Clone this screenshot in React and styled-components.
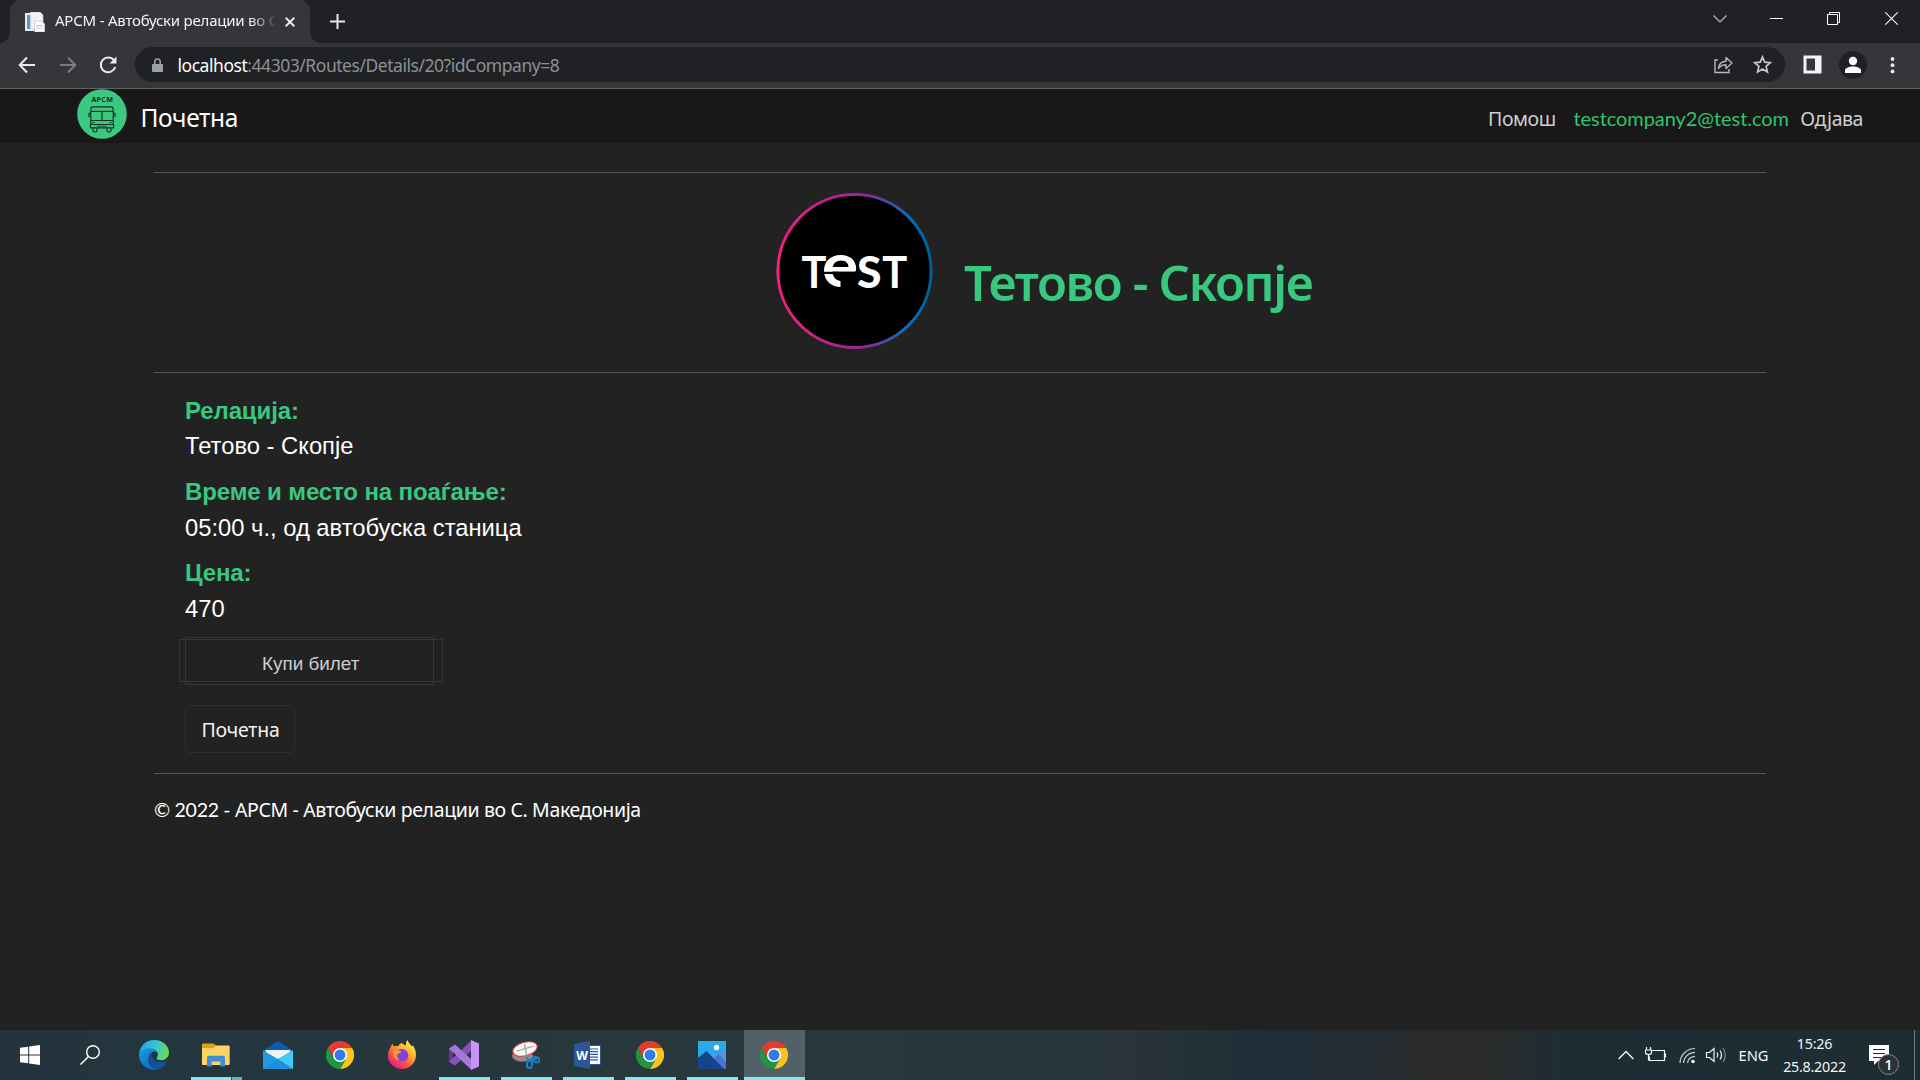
import React from "react";
import styled, { createGlobalStyle, css } from "styled-components";

const SEGOE = '"Noto Sans", "Open Sans", sans-serif';
const ARIAL = '"Liberation Sans", Arial, sans-serif';
const LATO = 'Lato, "Noto Sans", sans-serif';
const GREEN = "#38c880";

const GlobalStyle = createGlobalStyle`
  *, *::before, *::after { box-sizing: border-box; }
  body { margin: 0; background: #222; color: #fff; font-family: ${SEGOE}; }
  svg { display: block; flex: none; }
`;

const Screen = styled.div`
  width: 1920px;
  height: 1080px;
  display: flex;
  flex-direction: column;
  overflow: hidden;
`;

/* ---------- browser chrome ---------- */
const TabStrip = styled.div`
  height: 43px;
  flex: none;
  display: flex;
  background: #202124;
  padding-left: 10px;
`;

const Tab = styled.div`
  position: relative;
  width: 300px;
  height: 43px;
  display: flex;
  align-items: center;
  padding: 0 15px;
  background: #35363a;
  border-radius: 10px 10px 0 0;
  &::before, &::after {
    content: "";
    position: absolute;
    bottom: 0;
    width: 10px;
    height: 10px;
  }
  &::before { left: -10px; background: radial-gradient(circle at 0 0, #202124 9.5px, #35363a 10px); }
  &::after { right: -10px; background: radial-gradient(circle at 100% 0, #202124 9.5px, #35363a 10px); }
`;

const TabTitle = styled.div`
  width: 220px;
  margin: 0 10px;
  padding-bottom: 3px;
  overflow: hidden;
  white-space: nowrap;
  font-size: 15px;
  line-height: 24px;
  letter-spacing: -0.22px;
  color: #f1f3f4;
  mask-image: linear-gradient(90deg, #000 195px, transparent 222px);
`;

const NewTab = styled.div`
  display: flex;
  padding: 14px 0 0 20px;
`;

const WindowButtons = styled.div`
  display: flex;
  margin-left: auto;
  svg { margin-top: 9px; }
`;

const WindowButton = styled.div`
  width: ${(p) => p.$w}px;
  display: flex;
  justify-content: center;
`;

const Toolbar = styled.div`
  height: 46px;
  flex: none;
  display: flex;
  align-items: center;
  padding: 0 15px 2px 17px;
  background: #35363a;
  border-bottom: 1px solid #606164;
`;

const NavIcons = styled.div`
  display: flex;
  gap: 20.5px;
  width: 118px;
`;

const Omnibox = styled.div`
  width: 1650px;
  height: 35px;
  display: flex;
  align-items: center;
  padding: 0 12px 0 16px;
  border-radius: 18px;
  background: #202124;
`;

const Url = styled.div`
  margin-left: 13.5px;
  padding-top: 2px;
  flex: 1;
  font-size: 17.5px;
  line-height: 35px;
  letter-spacing: -0.46px;
  color: #8d9094;
  white-space: nowrap;
`;

const UrlHost = styled.span`
  color: #fff;
`;

const OmniActions = styled.div`
  display: flex;
  gap: 18px;
`;

const ToolbarActions = styled.div`
  display: flex;
  align-items: center;
  margin-left: 18px;
`;

const Avatar = styled.div`
  width: 28px;
  height: 28px;
  margin: 0 17px 0 17px;
  display: flex;
  align-items: center;
  justify-content: center;
  border-radius: 50%;
  background: #202124;
`;

/* ---------- web page ---------- */
const Navbar = styled.nav`
  height: 54px;
  flex: none;
  display: flex;
  background: #191717;
  padding: 0 57px 0 77px;
`;

const Brand = styled.a`
  display: flex;
  font-size: 24.5px;
  line-height: 58px;
  letter-spacing: -0.35px;
  margin-right: auto;
  svg { margin: 0.4px 13.5px 0 0; }
`;

const NavLink = styled.a`
  margin-left: ${(p) => p.$gap || 0}px;
  font-size: 19.5px;
  line-height: 59px;
  letter-spacing: -0.45px;
  color: #cfcfcf;
  ${(p) => p.$account && css`
    font-family: ${LATO};
    font-size: 20px;
    letter-spacing: -0.06px;
    color: #2fc46f;
  `}
`;

const Page = styled.main`
  flex: 1;
  width: 1612px;
  margin-left: 154px;
  padding-top: 29px;
`;

const Rule = styled.hr`
  height: 1px;
  margin: 0;
  border: 0;
  background: #585858;
`;

const Hero = styled.header`
  height: 199px;
  display: flex;
  padding: 19px 0 0 621px;
`;

const Heading = styled.h1`
  margin: 60px 0 0 31px;
  font-size: 49px;
  font-weight: 600;
  line-height: 60px;
  letter-spacing: -1.35px;
  color: ${GREEN};
`;

const Details = styled.section`
  height: 400px;
  padding: 19.75px 0 0 31px;
  font-family: ${ARIAL};
`;

const DetailList = styled.dl`
  margin: 0;
  height: 244.25px;
`;

const Term = styled.dt`
  margin-bottom: 0.5px;
  font-size: 24px;
  font-weight: 700;
  line-height: 35px;
  letter-spacing: -0.12px;
  color: ${GREEN};
`;

const Value = styled.dd`
  margin: 0 0 9.75px;
  font-size: 23.75px;
  line-height: 36px;
`;

const BuyButton = styled.div`
  position: relative;
  width: 249px;
  height: 48px;
  border: 1px solid #353535;
  padding-left: 76px;
  font-size: 18.9px;
  line-height: 51px;
  color: #cdcdcd;
  &::before {
    content: "";
    position: absolute;
    inset: 1px -10px 2px -7px;
    border: 1px solid #353535;
  }
`;

const BackButton = styled.div`
  width: 110px;
  height: 48px;
  margin-top: 20px;
  padding-left: 1px;
  border: 1px solid #303030;
  border-radius: 5px;
  text-align: center;
  font-family: ${SEGOE};
  font-size: 19.5px;
  line-height: 48px;
  letter-spacing: -0.2px;
  color: #f2f2f2;
`;

const Footer = styled.footer`
  padding-top: 19px;
  font-size: 19.5px;
  line-height: 33px;
  letter-spacing: -0.37px;
  white-space: pre;
`;

const FooterYear = styled.span`
  font-family: ${LATO};
  letter-spacing: -0.3px;
`;

/* ---------- taskbar ---------- */
const Taskbar = styled.div`
  height: 50px;
  flex: none;
  display: flex;
  background: linear-gradient(90deg, #23343d 0, #24363e 300px, #28373c 560px, #27373c 900px, #283439 1130px, #212e37 1250px, #212c35 1350px, #2a2a29 1430px, #2a2a29 1480px, #1e2d34 1570px, #1e2c35 1650px, #1f2c34 1920px);
`;

const TaskCell = styled.div`
  width: ${(p) => p.$w || 61}px;
  height: 50px;
  margin-right: ${(p) => (p.$w ? 0 : 1)}px;
  padding-right: ${(p) => (p.$w ? 0 : 1)}px;
  display: flex;
  align-items: center;
  justify-content: center;
  background: ${(p) => (p.$state === "active" ? "#526067" : "transparent")};
  background-image: ${(p) =>
    p.$state === "active"
      ? "linear-gradient(#8ee4ec, #8ee4ec)"
      : p.$state === "group"
      ? "linear-gradient(90deg, #8ee4ec 40px, #3e5f68 40px, #3e5f68 41px, #6fafb9 41px)"
      : "linear-gradient(#8ee4ec, #8ee4ec)"};
  background-repeat: no-repeat;
  background-position: 50% 100%;
  background-size: ${(p) =>
    p.$state === "active" ? "61px 3px" : p.$state ? "51px 3px" : "0 0"};
`;

const StartCells = styled.div`
  display: flex;
  width: 124px;
`;

const Tray = styled.div`
  display: flex;
  align-items: center;
  margin-left: auto;
  color: #f3f5f6;
`;

const Language = styled.div`
  margin-left: 10.5px;
  width: 43px;
  font-size: 14.7px;
  line-height: 48px;
`;

const Clock = styled.div`
  width: 66px;
  display: flex;
  flex-direction: column;
  align-items: center;
  font-size: 14.3px;
  line-height: 23px;
  letter-spacing: -0.25px;
`;

const Notifications = styled.div`
  width: 33px;
  margin: 0 15px 0 18.5px;
`;

const ShowDesktop = styled.div`
  width: 6px;
  height: 50px;
  border-left: 1px solid #707a80;
`;

/* ---------- drawings ---------- */
const Stroke = ({ w, h, vb, c = "#e8eaed", sw = 2, children, ...rest }) => (
  <svg width={w} height={h} viewBox={vb || `0 0 ${w} ${h}`} fill="none" stroke={c} strokeWidth={sw} {...rest}>
    {children}
  </svg>
);

const PageIcon = () => (
  <svg width="20" height="20" viewBox="0 0 20 20">
    <path d="M0 1h9v18H0z" fill="#e9eef2" />
    <path d="M2 3h3.5v14H2z" fill="#4d9ccc" />
    <path d="M5.5 0H15l3 3v14H5.5z" fill="#f0f1f3" stroke="#c9ced4" strokeWidth=".6" />
    <path d="M9.5 9h7l3.3 3v8H9.5z" fill="#fafafa" stroke="#b9bfc7" strokeWidth=".6" />
    <path d="M11 13.5h7M11 16h7" stroke="#c6cbd2" />
  </svg>
);

const BusLogo = () => (
  <svg width="50" height="50" viewBox="0 0 50 50">
    <circle cx="25" cy="25" r="24.8" fill="#3bc982" />
    <text x="25.3" y="13.3" textAnchor="middle" fontFamily="Open Sans, sans-serif" fontWeight="700" fontSize="7.2" letterSpacing=".25" fill="#12351f">АРСМ</text>
    <g fill="none" stroke="#12351f" strokeWidth="1.15">
      <path d="M13.8 35V20.3q0-2.5 2.5-2.5h17.4q2.5 0 2.5 2.5V35M13.8 22.3h22.4M14 31.5h22M25 22.3v9.2M13.8 24.3h-1.7v4M36.2 24.3h1.7v4" />
      <path d="M13.4 35.5h23.2v3.3H13.4zM16 39v2.6q0 1.4 1.5 1.4h1q1.5 0 1.5-1.4V39M30 39v2.6q0 1.4 1.5 1.4h1q1.5 0 1.5-1.4V39" />
      <path d="M15 33.6h3M32 33.6h3M20 37.2h10" strokeWidth=".8" />
    </g>
  </svg>
);

const TestLogo = () => (
  <svg width="158" height="158" viewBox="0 0 158 158">
    <defs>
      <linearGradient id="ring" x1="0" x2="1" y1="0" y2="0">
        <stop offset="0" stopColor="#f4207c" />
        <stop offset=".1" stopColor="#e0207e" />
        <stop offset=".55" stopColor="#93278f" />
        <stop offset=".72" stopColor="#4a4ba8" />
        <stop offset=".86" stopColor="#0071bc" />
        <stop offset="1" stopColor="#005f9e" />
      </linearGradient>
    </defs>
    <circle cx="79.5" cy="79" r="76.6" fill="#000" stroke="url(#ring)" strokeWidth="3" />
    <g fill="#fff" fontFamily="Lato, sans-serif" fontWeight="700">
      <text x="26.6" y="95.6" fontSize="43" textLength="25" lengthAdjust="spacingAndGlyphs">T</text>
      <text x="46.8" y="95.4" fontSize="61" textLength="36.5" lengthAdjust="spacingAndGlyphs">e</text>
      <text x="82" y="95.6" fontSize="43" fontWeight="900" textLength="24.5" lengthAdjust="spacingAndGlyphs">S</text>
      <text x="107.3" y="95.6" fontSize="43" textLength="25" lengthAdjust="spacingAndGlyphs">T</text>
    </g>
    <path d="M48 80.900h16" stroke="#000" strokeWidth="2.200" />
    <path d="M65.500 85.500h16.500v12H65.500z" fill="#000" />
  </svg>
);

const Chrome = () => (
  <svg width="28" height="28" viewBox="0 0 48 48">
    <path d="M24 12h20.8A24 24 0 0 0 3.2 12l10.4 18z" fill="#e33b2e" />
    <path d="M34.4 30 24 48A24 24 0 0 0 44.8 12H24z" fill="#fcc31e" />
    <path d="M13.6 30 3.2 12A24 24 0 0 0 24 48l10.4-18z" fill="#229342" />
    <circle cx="24" cy="24" r="12" fill="#fff" />
    <circle cx="24" cy="24" r="9.4" fill="#2f7bea" />
  </svg>
);

const Edge = () => (
  <svg width="30" height="30" viewBox="0 0 30 30">
    <defs>
      <linearGradient id="eTop" x1="0" x2="1" y1=".3" y2=".5">
        <stop offset="0" stopColor="#1fa4e6" />
        <stop offset=".5" stopColor="#36c5d8" />
        <stop offset="1" stopColor="#66dc4c" />
      </linearGradient>
      <linearGradient id="eLeft" x1="0" x2=".6" y1="0" y2="1">
        <stop offset="0" stopColor="#1b9de2" />
        <stop offset="1" stopColor="#0a6ac4" />
      </linearGradient>
    </defs>
    <path d="M.1 14C.8 6 7 0 15 0c9 0 15 6 15 12.6 0 4.7-3.6 7.7-7.7 7.7-3 0-4.8-1-4.8-2 0-.8 1.4-1.4 1.4-3.8 0-2.7-2.6-5.6-7-5.6C6 8.900 1.600 11 .1 14z" fill="url(#eTop)" />
    <path d="M.1 14C1 10.500 5.800 8.200 10.500 8.200c5 0 8.500 3 8.500 6 0-1.200-1.500-2.600-3.600-2.600-3.400 0-6 3.700-6 7.600 0 6 4.600 9.900 10 10.200C17.500 30 16 30 15 30 6 30-.5 22.500.1 14z" fill="url(#eLeft)" />
    <path d="M14.500 12c-2.800 1-4.600 4-4.600 7.300 0 6 5 10.700 10.300 9.900 3.300-1.400 6-4 7.500-7 .3-.700-.200-1.200-.800-.900-1.400.700-2.900 1-4.600 1-5.400 0-9.700-3.600-9.700-8 0-1 .7-1.900 1.900-2.300z" fill="#11529f" />
  </svg>
);

const Explorer = () => (
  <svg width="28" height="24" viewBox="0 0 28 24">
    <path d="M0 1.500Q0 .500 1 .500h10.500l2.500 2h12.500q1 0 1 1V21q0 1-1 1H1q-1 0-1-1z" fill="#e3a008" />
    <path d="M0 5h11.500l2-2.200h13q1 0 1 1V21q0 1-1 1H1q-1 0-1-1z" fill="#fdd366" />
    <path d="M5 23.500V14.500Q5 12.800 6.700 12.800h14.600q1.700 0 1.700 1.700v9h-4.600v-5H9.600v5z" fill="#3a8fd2" />
  </svg>
);

const Mail = () => (
  <svg width="30" height="28" viewBox="0 0 30 28">
    <path d="M0 9.500 15 0l15 9.500V12H0z" fill="#0b5cad" />
    <path d="M2.500 9h25v9h-25z" fill="#f2f2f2" />
    <path d="M0 9.500 15 18l15-8.500V28H0z" fill="#1f9be6" />
    <path d="M30 9.500V28L15 18z" fill="#40ccf7" />
    <path d="M0 28h30L15 18z" fill="#1d8fdc" />
  </svg>
);

const Firefox = () => (
  <svg width="28" height="30" viewBox="0 0 28 30">
    <defs>
      <linearGradient id="fx" x1=".85" x2=".2" y1=".05" y2=".95">
        <stop offset="0" stopColor="#fff44f" />
        <stop offset=".35" stopColor="#ffb22e" />
        <stop offset=".65" stopColor="#ff5a3c" />
        <stop offset="1" stopColor="#e31587" />
      </linearGradient>
    </defs>
    <path d="M3 6.500c.3-1 1-2.200 1.700-2.800.2 1.200.7 2.100 1.300 2.800 1.300-.500 3-.600 4.200-.200C11.800 3.500 14 3 14 3c1.500 1.500 3 2.500 4 2.500-.3-2 .1-4 1.500-5.500.5 2.500 3 4.300 4.500 6.500.6-.400.700-1 .700-1.600C27 8 28 11.500 28 15c0 8-6.300 14-14 14S0 23 0 15.500C0 12 1.200 9 3 6.500z" fill="url(#fx)" />
    <circle cx="14" cy="15.300" r="6.300" fill="#8243d6" />
    <path d="M5 11c3-1.500 6-1 8.500 1-1.500 1.200-3.500 1.200-4.300 2.800-.7 1.600.3 4 2.600 5-3.300.500-6.800-2-6.800-6z" fill="#ff9a2e" />
  </svg>
);

const VisualStudio = () => (
  <svg width="30" height="30" viewBox="0 0 30 30">
    <path d="M0 8.300 6 4.500v21L0 21.700z" fill="#653a92" />
    <path d="M0 21.700 22 1v10L6 25.500z" fill="#8752b8" />
    <path d="M6 4.500 22 19v10.500L0 8.800z" fill="#a778dc" />
    <path d="M22 0l8 3.600v22.800L22 30z" fill="#c993f7" />
    <path d="M4 12v6l3-3z" fill="#28363c" />
  </svg>
);

const Snip = () => (
  <svg width="28" height="28" viewBox="0 0 28 28">
    <ellipse cx="10.500" cy="15" rx="10.500" ry="5.500" fill="#8c9194" stroke="#b9443d" strokeWidth=".8" />
    <ellipse cx="13" cy="8" rx="12.500" ry="6.800" transform="rotate(-15 13 8)" fill="#f7f7f7" stroke="#d93a33" />
    <path d="M5 10l17-5M12.500 3l2.500 13" stroke="#9a9da0" strokeWidth="1.200" />
    <g fill="none" stroke="#1984c9" strokeWidth="2">
      <path d="M14.500 16 17 19.500l8-2" />
      <ellipse cx="24" cy="18.500" rx="3.500" ry="2.500" transform="rotate(20 24 18.500)" />
      <ellipse cx="17.500" cy="23.500" rx="2.500" ry="3.700" transform="rotate(8 17.500 23.500)" />
    </g>
  </svg>
);

const Word = () => (
  <svg width="28" height="28" viewBox="0 0 28 28">
    <path d="M14 4.500h12.500V23.500H14z" fill="#fff" stroke="#2b5797" />
    <path d="M16 8h8M16 10.700h8M16 13.400h8M16 16.100h8M16 18.800h8" stroke="#2b5797" strokeWidth="1.200" />
    <path d="M0 3 16 0v28L0 25z" fill="#2b579a" />
    <text x="8" y="18.500" textAnchor="middle" fontFamily="Open Sans, sans-serif" fontWeight="700" fontSize="12" fill="#fff">W</text>
  </svg>
);

const Photos = () => (
  <svg width="28" height="28" viewBox="0 0 28 28">
    <path d="M0 0h28v28H0z" fill="#29a8ea" />
    <path d="M28 10v18H12l5-15z" fill="#6d8fe0" opacity=".55" />
    <path d="M16 17.500 20.500 13 28 21v7H16z" fill="#4a72cf" />
    <path d="M0 17 8.500 10 26 28H0z" fill="#16448c" />
    <circle cx="18.500" cy="6.500" r="2.700" fill="#fff" />
  </svg>
);

const pinned = [
  [Edge],
  [Explorer, "group"],
  [Mail],
  [Chrome],
  [Firefox],
  [VisualStudio, "open"],
  [Snip, "open"],
  [Word, "open"],
  [Chrome, "open"],
  [Photos, "open"],
  [Chrome, "active"],
];

const details = [
  ["Релација:", "Тетово - Скопје"],
  ["Време и место на поаѓање:", "05:00 ч., од автобуска станица"],
  ["Цена:", "470"],
];

export default function App() {
  return (
    <Screen>
      <GlobalStyle />
      <TabStrip>
        <Tab>
          <PageIcon />
          <TabTitle>АРСМ - Автобуски релации во С. Македонија</TabTitle>
          <Stroke w={10} h={10}><path d="M.7.7l8.600 8.600M9.300.7.7 9.300" /></Stroke>
        </Tab>
        <NewTab>
          <Stroke w={15} h={15}><path d="M7.500 0v15M0 7.500h15" /></Stroke>
        </NewTab>
        <WindowButtons>
          <WindowButton $w={57}><Stroke w={14} h={19} sw={1.100} c="#bdc1c6"><path d="M.500 6.500 7 13l6.500-6.500" /></Stroke></WindowButton>
          <WindowButton $w={57}><Stroke w={13} h={19} sw={1} c="#fff"><path d="M0 9.500h13" /></Stroke></WindowButton>
          <WindowButton $w={57}><Stroke w={13} h={19} sw={1} c="#fff"><path d="M.500 5.500h10v10H.500zM2.500 5.500v-2h10v10h-2" /></Stroke></WindowButton>
          <WindowButton $w={58}><Stroke w={13} h={19} sw={1.200} c="#fff"><path d="M.300 3.300l12.400 12.400M12.700 3.300.300 15.700" /></Stroke></WindowButton>
        </WindowButtons>
      </TabStrip>
      <Toolbar>
        <NavIcons>
          <Stroke w={20} h={20}><path d="M18 10H3M10 2.500 2.700 10l7.300 7.500" /></Stroke>
          <Stroke w={20} h={20} c="#7b7c7f"><path d="M2 10h15M10 2.500l7.300 7.500-7.300 7.500" /></Stroke>
          <Stroke w={20} h={20}>
            <path d="M16 5.200A7.400 7.400 0 1 0 17.300 12" />
            <path d="M18.500 1.500v7h-7z" fill="#e8eaed" stroke="none" />
          </Stroke>
        </NavIcons>
        <Omnibox>
          <svg width="13" height="16" viewBox="0 0 13 16">
            <path d="M1.500 7.500h10v7h-10z" fill="#9aa0a6" stroke="#9aa0a6" strokeLinejoin="round" />
            <path d="M3.800 7V4.800a2.700 2.700 0 0 1 5.400 0V7" fill="none" stroke="#9aa0a6" strokeWidth="1.500" />
          </svg>
          <Url><UrlHost>localhost</UrlHost>:44303/Routes/Details/20?idCompany=8</Url>
          <OmniActions>
            <Stroke w={21} h={21} c="#b4b7bb" sw={1.400}>
              <path d="M5 6H2v12.500h14V15" />
              <path d="M5.500 14.500c.3-4.500 3-7 7.500-7.200V3.500l6 5.500-6 5.500v-3.800c-3.500 0-5.800 1-7.500 3.800z" strokeLinejoin="round" />
            </Stroke>
            <Stroke w={21} h={21} c="#c4c7ca" sw={1.700}>
              <path d="M10.500 3l2.200 5.200 5.600.5-4.200 3.700 1.300 5.500-4.900-2.900-4.900 2.900 1.300-5.500-4.200-3.700 5.600-.500z" />
            </Stroke>
          </OmniActions>
        </Omnibox>
        <ToolbarActions>
          <svg width="19" height="19" viewBox="0 0 19 19">
            <path d="M.500.500h18v18H.500zM3.500 3.500v12h8.500v-12z" fill="#f1f3f4" fillRule="evenodd" />
          </svg>
          <Avatar>
            <svg width="18" height="18" viewBox="0 0 18 18" fill="#fff">
              <circle cx="9" cy="5" r="4.200" />
              <path d="M1 17v-2.500c0-2.500 4.500-4 8-4s8 1.500 8 4V17z" />
            </svg>
          </Avatar>
          <svg width="17" height="18" viewBox="0 0 17 18" fill="#e8eaed">
            <circle cx="8.500" cy="3" r="1.900" />
            <circle cx="8.500" cy="9.200" r="1.900" />
            <circle cx="8.500" cy="15.400" r="1.900" />
          </svg>
        </ToolbarActions>
      </Toolbar>

      <Navbar>
        <Brand><BusLogo />Почетна</Brand>
        <NavLink>Помош</NavLink>
        <NavLink $account $gap={17.8}>testcompany2@test.com</NavLink>
        <NavLink $gap={11.4}>Одјава</NavLink>
      </Navbar>

      <Page>
        <Rule />
        <Hero>
          <TestLogo />
          <Heading>Тетово - Скопје</Heading>
        </Hero>
        <Rule />
        <Details>
          <DetailList>
            {details.map(([term, value]) => (
              <React.Fragment key={term}>
                <Term>{term}</Term>
                <Value>{value}</Value>
              </React.Fragment>
            ))}
          </DetailList>
          <BuyButton>Купи билет</BuyButton>
          <BackButton>Почетна</BackButton>
        </Details>
        <Rule />
        <Footer><FooterYear>© 2022 - </FooterYear>АРСМ - Автобуски релации во С. Македонија</Footer>
      </Page>

      <Taskbar>
        <StartCells>
          <TaskCell $w={60}>
            <svg width="20" height="20" viewBox="0 0 20 20" fill="#fff">
              <path d="M0 2.800 8.200 1.700v7.800H0zM9.200 1.500 20 0v9.500H9.200zM0 10.500h8.200v7.800L0 17.200zM9.200 10.500H20V20L9.200 18.500z" />
            </svg>
          </TaskCell>
          <TaskCell $w={60}>
            <Stroke w={20} h={20} c="#fff" sw={1.400}><circle cx="13" cy="7" r="6.300" /><path d="M8.500 11.500.500 19.500" /></Stroke>
          </TaskCell>
        </StartCells>
        {pinned.map(([Icon, state], i) => (
          <TaskCell key={i} $state={state}><Icon /></TaskCell>
        ))}
        <Tray>
          <Stroke w={16} h={50} c="#f3f5f6" sw={1.400}><path d="M.600 29 8 21.500l7.400 7.500" /></Stroke>
          <Stroke w={45} h={50} c="#f3f5f6" sw={1.200}>
            <path d="M18 20.500h12.500v10H15.500v-4M31.500 23.500v4M12.500 17v3M16.500 17v3M11.500 20h6v2.500q0 2-3 2t-3-2zM14.500 24.500v6" />
          </Stroke>
          <Stroke w={17} h={50} c="#c2c9cd" sw={1.200}>
            <path d="M1 33A15 15 0 0 1 16 18.500M4.500 33A11.500 11.500 0 0 1 16 22.300M8.500 33A7.500 7.500 0 0 1 16 26.300" />
            <circle cx="14" cy="31.500" r="1.700" fill="#fff" stroke="none" />
          </Stroke>
          <Stroke w={32} h={50} c="#f3f5f6" sw={1.200}>
            <path d="M10.500 22.500h3l4.500-4v13l-4.500-4h-3zM21 22.500q1.500 2.500 0 5M24 20.500q3 4.500 0 9" />
            <path d="M27 18q4.500 7 0 14" stroke="#7f8a90" />
          </Stroke>
          <Language>ENG</Language>
          <Clock><span>15:26</span><span>25.8.2022</span></Clock>
          <Notifications>
            <svg width="33" height="50" viewBox="0 0 33 50">
              <path d="M3 15h20v16H12l-4 4v-4H3z" fill="#fff" />
              <path d="M7 19.500h12M7 23.500h12M7 27.500h8" stroke="#1f2c34" strokeWidth="1.200" />
              <circle cx="22.500" cy="34.500" r="10" fill="#2c3336" stroke="#80878a" />
              <text x="22.500" y="40" textAnchor="middle" fontFamily="Noto Sans, sans-serif" fontSize="15" fontWeight="500" fill="#fff">1</text>
            </svg>
          </Notifications>
          <ShowDesktop />
        </Tray>
      </Taskbar>
    </Screen>
  );
}
